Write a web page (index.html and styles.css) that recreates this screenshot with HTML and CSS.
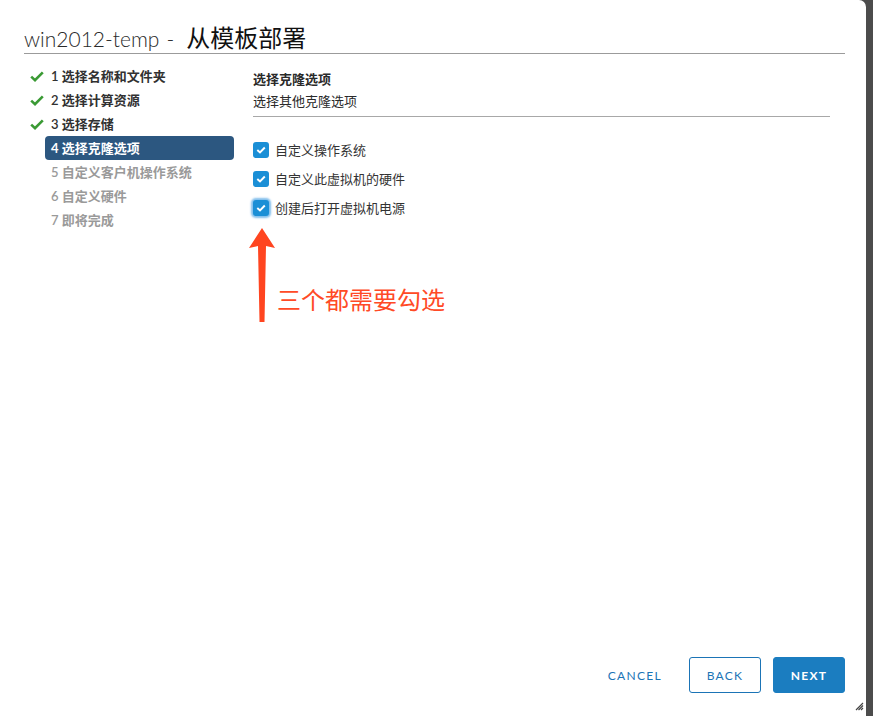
FILE: index.html
```html
<!DOCTYPE html>
<html lang="zh-CN">
<head>
<meta charset="utf-8">
<title>win2012-temp - 从模板部署</title>
<link rel="stylesheet" href="styles.css">
</head>
<body>
<div class="dialog">
  <div class="header">
    <h1 class="title"><span class="title-vm">win2012-temp</span><span class="title-sep">-</span><span class="title-cn">从模板部署</span></h1>
  </div>
  <div class="main">
    <ul class="steps">
      <li class="step done"><span class="step-icon"><svg width="14" height="11" viewBox="0 0 14 11"><path d="M1.2 5.6 L5 9.2 L12.8 1.4" fill="none" stroke="#3a9a34" stroke-width="2.6"/></svg></span><span class="step-label">1 选择名称和文件夹</span></li>
      <li class="step done"><span class="step-icon"><svg width="14" height="11" viewBox="0 0 14 11"><path d="M1.2 5.6 L5 9.2 L12.8 1.4" fill="none" stroke="#3a9a34" stroke-width="2.6"/></svg></span><span class="step-label">2 选择计算资源</span></li>
      <li class="step done"><span class="step-icon"><svg width="14" height="11" viewBox="0 0 14 11"><path d="M1.2 5.6 L5 9.2 L12.8 1.4" fill="none" stroke="#3a9a34" stroke-width="2.6"/></svg></span><span class="step-label">3 选择存储</span></li>
      <li class="step active"><span class="step-icon"></span><span class="step-label">4 选择克隆选项</span></li>
      <li class="step todo"><span class="step-icon"></span><span class="step-label">5 自定义客户机操作系统</span></li>
      <li class="step todo"><span class="step-icon"></span><span class="step-label">6 自定义硬件</span></li>
      <li class="step todo"><span class="step-icon"></span><span class="step-label">7 即将完成</span></li>
    </ul>
    <div class="content">
      <div class="content-head">
        <div class="content-title">选择克隆选项</div>
        <div class="content-sub">选择其他克隆选项</div>
      </div>
      <ul class="options">
        <li class="option"><span class="cb"><svg width="10" height="8" viewBox="0 0 10 8"><path d="M1.3 4 L4 6.5 L8.8 1.5" fill="none" stroke="#fff" stroke-width="1.9"/></svg></span><span>自定义操作系统</span></li>
        <li class="option"><span class="cb"><svg width="10" height="8" viewBox="0 0 10 8"><path d="M1.3 4 L4 6.5 L8.8 1.5" fill="none" stroke="#fff" stroke-width="1.9"/></svg></span><span>自定义此虚拟机的硬件</span></li>
        <li class="option"><span class="cb focus"><svg width="10" height="8" viewBox="0 0 10 8"><path d="M1.3 4 L4 6.5 L8.8 1.5" fill="none" stroke="#fff" stroke-width="1.9"/></svg></span><span>创建后打开虚拟机电源</span></li>
      </ul>
    </div>
  </div>
  <div class="footer">
    <button class="btn btn-link">CANCEL</button>
    <button class="btn btn-outline">BACK</button>
    <button class="btn btn-primary">NEXT</button>
  </div>
  <div class="annotation">
    <svg class="arrow" width="30" height="100" viewBox="0 0 30 100"><polygon points="14,2 27,22 18,20 16.5,96 11.5,96 10,20 1,22" fill="#ff4520"/></svg>
    <span class="note">三个都需要勾选</span>
  </div>
  <svg class="resize" width="9" height="9" viewBox="0 0 9 9"><path d="M8 1 L1 8 M8 3.5 L3.5 8 M8 6 L6 8" stroke="#444" stroke-width="1.2"/></svg>
</div>
</body>
</html>
```
FILE: styles.css
```css
* { box-sizing: border-box; }
html, body { margin: 0; padding: 0; }
body {
  background: #4c4c4c;
  font-family: Lato, "Noto Sans CJK SC", sans-serif;
  color: #333;
  width: 873px;
  height: 716px;
  overflow: hidden;
}
.dialog {
  position: relative;
  width: 866px;
  height: 716px;
  background: #fff;
  border-top-right-radius: 7px;
  display: flex;
  flex-direction: column;
}
.header {
  padding: 22px 21px 0 24px;
}
.title {
  margin: 0;
  height: 32px;
  display: flex;
  align-items: baseline;
  font-size: 21px;
  line-height: 30px;
  font-weight: 400;
  color: #111;
  border-bottom: 1px solid #9b9b9b;
  white-space: nowrap;
}
.title-vm {
  font-weight: 300;
  color: #2a2a2a;
}
.title-sep {
  font-weight: 300;
  color: #2a2a2a;
  margin: 0 12px 0 7px;
}
.title-cn {
  font-family: "Noto Sans CJK SC", sans-serif;
  font-size: 24px;
  line-height: 30px;
  font-weight: 400;
  color: #111;
}
.main {
  flex: 1;
  display: flex;
  padding: 10px 36px 0 24px;
  gap: 19px;
}
.steps {
  list-style: none;
  margin: 0;
  padding: 0;
  width: 210px;
}
.step {
  display: flex;
  align-items: center;
  height: 24px;
  font-size: 13px;
  font-weight: 600;
}
.step-icon {
  width: 21px;
  display: flex;
  align-items: center;
  padding-left: 6px;
}
.step-label {
  flex: 1;
  height: 24px;
  line-height: 24px;
  padding-left: 6px;
  border-radius: 4px;
}
.step.done .step-label { color: #313131; }
.step.active .step-label {
  background: #2c5780;
  color: #fff;
  font-weight: 700;
}
.step.todo .step-label { color: #9a9a9a; }
.content {
  flex: 1;
  padding-top: 4px;
}
.content-head {
  border-bottom: 1px solid #a8a8a8;
  padding-bottom: 4px;
  font-size: 13px;
  line-height: 22px;
}
.content-title { font-weight: 600; color: #2a2a2a; }
.content-sub { color: #2a2a2a; }
.options {
  list-style: none;
  margin: 18px 0 0;
  padding: 0;
}
.option {
  display: flex;
  align-items: center;
  gap: 6px;
  height: 29px;
  font-size: 13px;
  color: #333;
}
.cb {
  width: 16px;
  height: 16px;
  border-radius: 3px;
  background: #1b8fd6;
  display: flex;
  align-items: center;
  justify-content: center;
}
.cb.focus {
  box-shadow: 0 0 2px 2px rgba(90, 170, 230, 0.75);
}
.footer {
  display: flex;
  justify-content: flex-end;
  align-items: center;
  padding: 0 21px 23px 0;
}
.btn {
  height: 36px;
  font-family: Lato, "Noto Sans CJK SC", sans-serif;
  font-size: 12px;
  letter-spacing: 1.3px;
  border-radius: 3px;
  cursor: pointer;
}
.btn-link {
  background: none;
  border: none;
  color: #1b74b6;
  padding: 0 12px;
  margin-right: 15px;
}
.btn-outline {
  width: 72px;
  background: #fff;
  border: 1px solid #1b74b6;
  color: #1b74b6;
  margin-right: 12px;
}
.btn-primary {
  width: 72px;
  background: #1b7dc0;
  border: 1px solid #1b7dc0;
  color: #fff;
  font-weight: 700;
}
.annotation {
  position: absolute;
  left: 248px;
  top: 226px;
  display: flex;
  align-items: flex-end;
}
.arrow { display: block; }
.note {
  margin-left: -1px;
  position: relative;
  top: -12px;
  font-family: "Noto Sans CJK SC", sans-serif;
  font-size: 24px;
  line-height: 30px;
  color: #ff4a26;
}
.resize {
  position: absolute;
  right: 2px;
  bottom: 5px;
}
```
